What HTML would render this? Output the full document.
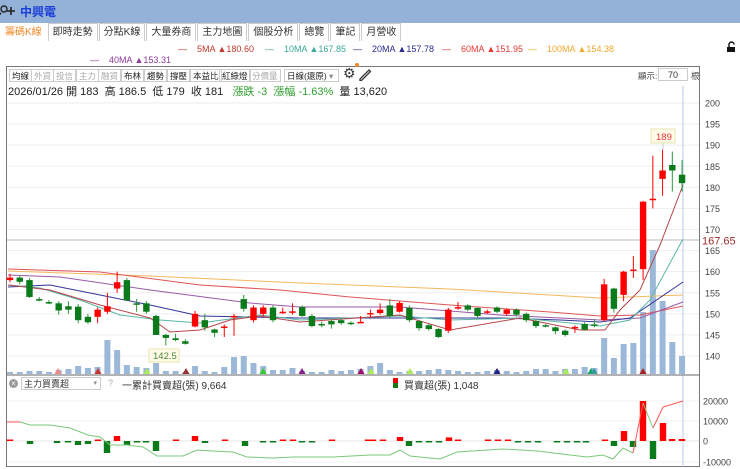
<!DOCTYPE html><html><head><meta charset="utf-8"><style>
*{margin:0;padding:0;box-sizing:border-box}
body{width:740px;height:469px;overflow:hidden;background:#fff;font-family:"Liberation Sans","Noto Sans CJK TC",sans-serif;position:relative;color:#333}
.top{position:absolute;left:0;top:0;width:740px;height:23px;background:#94b1d8}
.tabs{position:absolute;top:23px;left:0;height:18px;display:flex}
.tab{font-size:10px;height:18px;line-height:17px;padding:0 4px;border:1px solid #ccc;border-bottom:none;margin-right:1px;color:#333;background:#fff}
.abs{position:absolute;white-space:nowrap}
.leg{font-size:9px}
.tb{position:absolute;top:69px;height:13px;font-size:8.5px;line-height:12px;border:1px solid #ccc;padding:0 2px;color:#222}
.tb.d{color:#aaa}
</style></head><body>
<div class="top"></div>
<svg class="abs" style="left:0;top:4px" width="16" height="14"><circle cx="4" cy="5" r="3" stroke="#222" stroke-width="1.4" fill="none"/><path d="M1 9L-1 11M11 3v8M7 7h8" stroke="#222" stroke-width="1.6"/></svg>
<div class="abs" style="left:20px;top:3px;font-size:12px;font-weight:bold;color:#1a3fd8">中興電</div>
<div class="tabs"><div class="tab" style="color:#f08a2a;border-color:#fff">籌碼K線</div><div class="tab">即時走勢</div><div class="tab">分點K線</div><div class="tab">大量券商</div><div class="tab">主力地圖</div><div class="tab">個股分析</div><div class="tab">總覽</div><div class="tab">筆記</div><div class="tab">月營收</div></div>
<div class="abs leg" style="left:178px;top:44px;color:#c0392b">—&nbsp;&nbsp;&nbsp;&nbsp;5MA <span>▲180.60</span></div>
<div class="abs leg" style="left:265px;top:44px;color:#3aa89a">—&nbsp;&nbsp;&nbsp;&nbsp;10MA ▲167.85</div>
<div class="abs leg" style="left:353px;top:44px;color:#2a2a8a">—&nbsp;&nbsp;&nbsp;&nbsp;20MA ▲157.78</div>
<div class="abs leg" style="left:442px;top:44px;color:#e53935">—&nbsp;&nbsp;&nbsp;&nbsp;60MA ▲151.95</div>
<div class="abs leg" style="left:528px;top:44px;color:#f0a830">—&nbsp;&nbsp;&nbsp;&nbsp;100MA ▲154.38</div>
<div class="abs leg" style="left:90px;top:55px;color:#8e3a9a">—&nbsp;&nbsp;&nbsp;&nbsp;40MA ▲153.31</div>
<svg class="abs" style="left:724px;top:41px" width="14" height="12"><path d="M5 6V3.5a2.5 2.5 0 0 1 5 0" stroke="#111" stroke-width="1.4" fill="none"/><rect x="3" y="6" width="8" height="5" fill="#111"/></svg>
<div class="abs" style="left:6px;top:66px;width:694px;height:401px;border:1px solid #777"></div>
<div class="tb" style="left:9px">均線</div><div class="tb d" style="left:31px">外資</div><div class="tb d" style="left:53px">投信</div><div class="tb d" style="left:76px">主力</div><div class="tb d" style="left:98px">融資</div><div class="tb" style="left:121px">布林</div><div class="tb" style="left:144px">趨勢</div><div class="tb" style="left:167px">撐壓</div><div class="tb" style="left:190px">本益比</div><div class="tb" style="left:219px">紅綠燈</div><div class="tb d" style="left:249px">分價量</div>
<div class="tb" style="left:284px;width:55px">日線(還原) <span style="color:#888">▾</span></div>
<div class="abs" style="left:343px;top:65px;font-size:14px;color:#333">⚙</div>
<div class="abs" style="left:355px;top:63px;width:4px;height:4px;border-radius:2px;background:#f08a2a"></div>
<svg class="abs" style="left:358px;top:67px" width="14" height="14"><path d="M2 12L11 3l1.5 1.5L3.5 13.5H2z" stroke="#333" fill="none" stroke-width="1.3"/></svg>
<div class="abs" style="left:638px;top:70px;font-size:8.5px;color:#444">顯示:</div>
<div class="abs" style="left:658px;top:68px;width:30px;height:13px;border:1px solid #ccc;font-size:9px;text-align:center;line-height:12px">70</div>
<div class="abs" style="left:691px;top:70px;font-size:8.5px;color:#444">根</div>
<div class="abs" style="left:8px;top:83px;font-size:11px;color:#222">2026/01/26 開 183 &nbsp;高 186.5 &nbsp;低 179 &nbsp;收 181 &nbsp;&nbsp;<span style="color:#2e9e2e">漲跌 -3 &nbsp;漲幅 -1.63%</span> &nbsp;量 13,620</div>
<svg id="c" class="abs" style="left:0;top:0" width="740" height="469"></svg>
<div class="abs" style="left:9px;top:379px;width:9px;height:9px;border-radius:5px;background:#999;color:#fff;font-size:8px;line-height:9px;text-align:center">×</div>
<div class="abs" style="left:21px;top:377px;width:80px;height:13px;border:1px solid #ccc;font-size:9px;line-height:12px;padding-left:2px">主力買賣超<span style="position:absolute;right:3px;color:#888;font-size:7px">▾</span></div>
<div class="abs" style="left:108px;top:378px;font-size:9px;color:#aaa">?</div>
<div class="abs" style="left:122px;top:377px;font-size:10px;color:#333">一累計買賣超(張) 9,664</div>
<div class="abs" style="left:393px;top:378px;width:5px;height:5px;background:#e00"></div><div class="abs" style="left:393px;top:383px;width:5px;height:5px;background:#1a7a1a"></div>
<div class="abs" style="left:404px;top:377px;font-size:10px;color:#333">買賣超(張) 1,048</div>
<script>
var s='';function L(a){s+=a}
var Y=function(p){return 103+(200-p)*4.217};
for(var p=140;p<=200;p+=5){var y=Y(p);L('<line x1="7" x2="699" y1="'+y+'" y2="'+y+'" stroke="#eee"/>');L('<text x="705" y="'+(y+3.5)+'" font-size="9" fill="#444">'+p+'</text>')}
L('<line x1="7" x2="699" y1="240" y2="240" stroke="#bbb"/>');
L('<rect x="701" y="233" width="39" height="13" fill="#fff"/><text x="702" y="244.5" font-size="11" fill="#9b2a2a">167.65</text>');
[401,421,441,462].forEach(function(y,i){L('<line x1="7" x2="699" y1="'+y+'" y2="'+y+'" stroke="'+(i==2?'#e4e4e4':'#f2f2f2')+'"/>');L('<text x="703" y="'+(y+3.5)+'" font-size="9" fill="#444">'+['20000','10000','0','-10000'][i]+'</text>')});
L('<line x1="683" x2="683" y1="86" y2="467" stroke="#b8c8e6"/>');
L('<line x1="7" x2="699" y1="375" y2="375" stroke="#666"/>');
var vt=[372,372,371,371,372,370,369,366,368,367,340,350,365,367,368,363,371,371,372,366,371,372,367,357,356,363,366,370,370,368,371,372,372,370,371,370,369,366,363,370,372,371,371,370,369,370,371,372,372,371,370,371,372,371,369,369,371,369,369,367,368,338,358,344,343,312,250,301,342,356];
for(var i=0;i<70;i++){var x=10+i*9.74;L('<rect x="'+(x-3)+'" y="'+vt[i]+'" width="6" height="'+(374-vt[i])+'" fill="#9bb8d9"/>')}
[[58,'#e88'],[98,'#c33'],[147,'#ae5'],[186,'#933'],[263,'#3c3'],[302,'#828'],[361,'#a30a6a'],[371,'#ae5'],[591,'#1a6'],[643,'#a22'],[410,'#ae5'],[566,'#ae5'],[497,'#228'],[594,'#399']].forEach(function(t){var x=t[0];L('<path d="M'+(x-3.5)+' 374L'+x+' 368L'+(x+3.5)+' 374z" fill="'+t[1]+'"/>')});
function pl(pts,c){L('<polyline fill="none" stroke="'+c+'" stroke-width="1" points="'+pts.map(function(a){return a.join(',')}).join(' ')+'"/>')}
pl([[8,271],[150,276],[300,283],[450,289],[600,298],[683,295]],'#f4b860');
pl([[8,269],[100,272],[200,285],[280,290],[350,297],[450,305],[550,312],[600,316],[640,315],[683,306]],'#e05555');
pl([[8,275],[60,277],[150,290],[250,303],[300,307],[400,307],[500,315],[600,320],[640,318],[683,302]],'#9a5aa8');
pl([[8,287],[50,285],[100,295],[150,305],[200,316],[300,318],[400,318],[500,318],[560,320],[600,322],[630,318],[683,282]],'#34349a');
pl([[8,285],[40,288],[80,300],[120,315],[160,320],[200,323],[260,315],[300,320],[400,316],[450,320],[520,318],[600,326],[630,320],[650,300],[683,239]],'#5ab5a5');
pl([[8,285],[50,290],[100,305],[150,318],[170,332],[200,330],[230,320],[260,316],[300,322],[400,315],[450,330],[520,318],[580,330],[605,330],[620,310],[640,290],[660,245],[683,185]],'#b8454a');
var K=[[158,158.6,159.5,157.5],[158.6,157.6,159,157],[158,154,158.5,153.8],[153.5,153.4,154,153],[152.8,152.7,153.3,152.3],[152.5,150.8,153,149.8],[151.8,151,153,150],[151.7,148.5,152.3,147.8],[149.3,148,150,147.6],[149.3,151,151.5,147.8],[150.5,151.8,155,150],[156,157.5,160,155],[158,153.2,158.5,153],[152.5,152.3,153.5,150.5],[152.5,150.5,153,150],[149.5,145,149.8,145],[145,144.3,145.3,142.5],[144.2,143.8,145.3,143.5],[143.5,142.9,144,142.7],[147,150,150.7,146.8],[148.5,146.8,150,146],[146.3,145.5,146.5,144.5],[146.8,147,147.5,144.5],[149.3,149.5,150,144.8],[153.5,151.2,154.5,150.5],[148.5,151.5,152,148],[150,151.5,152,149.5],[151.5,148.5,152,148],[150.3,150.5,151.5,150],[150.4,150.6,152.5,149.8],[151.6,149.5,152,149.3],[149.5,147.1,150,146.8],[147.6,147.4,148.2,146.8],[148.3,147.5,148.6,146.5],[148.5,147.8,149,147.4],[147.9,147.7,148.2,147.3],[147.9,148.1,149.5,147.8],[150,150.2,151,149],[150.2,151,152.5,149.8],[152,149.5,153.5,149],[150.5,152.6,153,150.3],[151.4,148.5,152,148],[148.3,146.6,148.5,146],[147.3,146.4,147.6,146],[146.4,144.5,146.6,144.3],[146,151,151.4,145.5],[151.4,151.6,152.8,151],[152,151,152.3,150.6],[151.4,149.5,151.6,149],[150.4,150.6,151,150],[151.5,150.5,151.8,150.2],[150,151,151.3,149.5],[151,149.8,151.3,149.4],[150,148.5,150.3,148],[148.3,147.1,148.5,146.6],[147.3,147.1,147.6,146.8],[146.8,145.9,147,145.2],[146,145,146.3,144.6],[146.7,146.9,147.3,145.5],[147.6,146.2,148,146],[147.5,147.4,148.8,146.8],[148.5,157,158.3,148.2],[156,151.2,156.2,150.3],[154.5,160,160.2,153],[160.3,160.5,163.7,158.5],[160.6,176.6,176.8,158],[177,177.3,187.5,175],[182,184,189,178],[185.3,184,188.5,179],[183,181,186.5,179]];
for(var i=0;i<70;i++){var k=K[i],x=10+i*9.74,r=k[1]>=k[0],c=r?'#f00':'#0a7a1a',w=r?'#f00':'#2a9a3a';var t=Y(Math.max(k[0],k[1])),b=Y(Math.min(k[0],k[1]));if(b-t<1.5)b=t+1.5;L('<line x1="'+x+'" x2="'+x+'" y1="'+Y(k[2])+'" y2="'+Y(k[3])+'" stroke="'+w+'"/><rect x="'+(x-3.2)+'" y="'+t+'" width="6.4" height="'+(b-t)+'" fill="'+c+'"/>')}
L('<rect x="149" y="349" width="30" height="13" fill="#fffbe8" stroke="#e8e4b0"/><text x="153" y="359" font-size="9.5" fill="#4a8a3a">142.5</text>');
L('<line x1="663" x2="663" y1="143" y2="150" stroke="#ccc"/><rect x="651" y="129" width="24" height="14" fill="#fffbe8" stroke="#e8e4b0"/><text x="656" y="140" font-size="9.5" fill="#e33">189</text>');
var B=[[10,.3],[30,-1.5],[57,-1],[68,-.5],[78,-2],[88,-1.5],[98,.3],[107,-6],[117,2.5],[127,-2],[137,-.5],[146,-.5],[156,-5],[176,.3],[195,2.5],[205,-1],[225,.3],[245,-2.5],[263,-.5],[273,-.5],[283,.3],[293,.7],[302,-.5],[312,-.5],[332,.3],[368,.3],[373,.3],[383,.3],[400,2],[409,-2.5],[419,-.5],[429,-.5],[439,-.5],[449,1.8],[458,.7],[488,.3],[498,.3],[508,.3],[518,-.3],[528,-.3],[538,-.3],[557,-.7],[567,-.7],[577,-.3],[586,-.7],[605,.7],[614,-2.5],[624,5],[633,-3],[643,20],[653,-9],[663,9],[672,1],[682,1]];
B.forEach(function(a){var h=Math.max(Math.abs(a[1])*2,1.5),c=a[1]>0?'#f00':'#0a7a1a';L('<rect x="'+(a[0]-3.2)+'" y="'+(a[1]>0?441-h:441)+'" width="6.4" height="'+h+'" fill="'+c+'"/>')});
pl([[7,422],[20,422]],'#f55');
pl([[20,422],[30,425],[50,425],[70,428],[88,435],[100,437],[110,445],[127,445],[143,447],[157,456],[183,456],[197,450],[213,451],[233,452],[247,457],[273,458],[293,457],[333,457],[370,455],[390,455],[400,450],[410,456],[430,458],[440,459],[457,452],[503,449],[537,451],[570,455],[587,457],[603,455],[613,459],[623,448],[633,453]],'#7cc87c');
pl([[633,453],[643,403]],'#f55');pl([[643,403],[653,428]],'#7cc87c');pl([[653,428],[663,407],[683,401]],'#f55');
document.getElementById('c').innerHTML=s;
</script>
</body></html>
